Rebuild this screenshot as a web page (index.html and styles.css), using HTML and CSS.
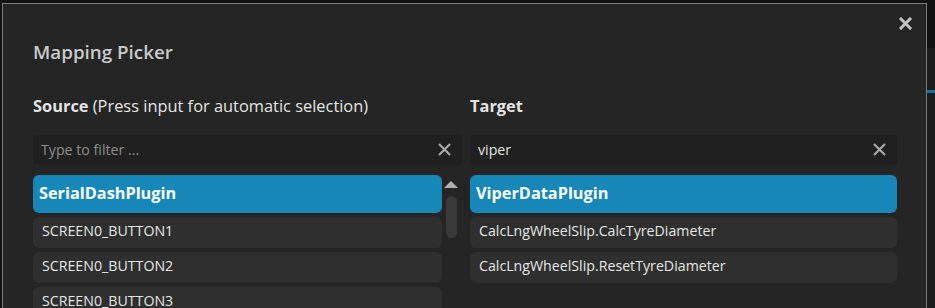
FILE: index.html
```html
<!DOCTYPE html>
<html lang="en">
<head>
  <meta charset="UTF-8">
  <meta name="viewport" content="width=device-width, initial-scale=1.0">
  <title>Mapping Picker</title>
  <link rel="stylesheet" href="styles.css">
</head>
<body>

  <!-- Ventana de fondo (parte visible a la derecha) -->
  <div class="backdrop">
    <div class="backdrop-bar"></div>
  </div>

  <div class="dialog">
    <button class="dialog-close" title="Close">
      <svg width="13" height="13" viewBox="0 0 13 13"><path d="M2 2 L11 11 M11 2 L2 11" stroke="#c4c4c4" stroke-width="3" stroke-linecap="square"/></svg>
    </button>

    <h1 class="dialog-title">Mapping Picker</h1>

    <div class="columns">
      <!-- Origen -->
      <div class="column">
        <h2 class="column-title"><strong>Source</strong> (Press input for automatic selection)</h2>
        <div class="filter">
          <input type="text" placeholder="Type to filter ...">
          <span class="filter-clear">
            <svg width="15" height="15" viewBox="0 0 15 15"><path d="M2 2 L13 13 M13 2 L2 13" stroke="#a8a8a8" stroke-width="2.2"/></svg>
          </span>
        </div>
        <div class="list-wrap">
          <div class="list">
            <div class="item item-group">SerialDashPlugin</div>
            <div class="item">SCREEN0_BUTTON1</div>
            <div class="item">SCREEN0_BUTTON2</div>
            <div class="item">SCREEN0_BUTTON3</div>
          </div>
          <div class="scrollbar">
            <div class="scroll-up"></div>
            <div class="scroll-thumb"></div>
          </div>
        </div>
      </div>

      <!-- Destino -->
      <div class="column">
        <h2 class="column-title"><strong>Target</strong></h2>
        <div class="filter">
          <input type="text" value="viper">
          <span class="filter-clear">
            <svg width="15" height="15" viewBox="0 0 15 15"><path d="M2 2 L13 13 M13 2 L2 13" stroke="#a8a8a8" stroke-width="2.2"/></svg>
          </span>
        </div>
        <div class="list">
          <div class="item item-group">ViperDataPlugin</div>
          <div class="item">CalcLngWheelSlip.CalcTyreDiameter</div>
          <div class="item">CalcLngWheelSlip.ResetTyreDiameter</div>
        </div>
      </div>
    </div>
  </div>

</body>
</html>
```

FILE: styles.css
```css
html, body {
  margin: 0;
  height: 100%;
  overflow: hidden;
}
body {
  background-color: #121212;
  font-family: "Open Sans", "Noto Sans", sans-serif;
  color: #e0e0e0;
  position: relative;
}
.backdrop {
  position: absolute;
  top: 48px;
  right: 0;
  width: 20px;
  height: 260px;
  background-color: #1b1b1b;
}
.backdrop-bar {
  margin-top: 42px;
  height: 3px;
  background-color: #1a6f99;
}
.dialog {
  position: relative;
  margin: 3px 0 0 2px;
  width: 925px;
  height: 320px;
  background-color: #252525;
  border: 1px solid #7c7c7c;
  border-bottom: none;
  padding: 0 29px 0 30px;
  box-sizing: border-box;
}
.dialog-close {
  position: absolute;
  top: 13px;
  right: 14px;
  background: none;
  border: none;
  padding: 0;
  cursor: pointer;
}
.dialog-title {
  margin: 0;
  padding-top: 35px;
  font-size: 18.8px;
  font-weight: 600;
  color: #cacaca;
  line-height: 26px;
}
.columns {
  display: grid;
  grid-template-columns: 429px 427px;
  gap: 8px;
  margin-top: 30px;
}
.column-title {
  margin: 0 0 18px 0;
  font-size: 16.4px;
  font-weight: normal;
  line-height: 22px;
  color: #e4e4e4;
}
.column-title strong {
  font-weight: 700;
}
.filter {
  position: relative;
  height: 30px;
  background-color: #202020;
  border-radius: 3px;
  margin-bottom: 10px;
}
.filter input {
  width: 100%;
  height: 30px;
  box-sizing: border-box;
  background: transparent;
  border: none;
  outline: none;
  padding: 0 36px 2px 8px;
  font-family: inherit;
  font-size: 14.2px;
  color: #e2e2e2;
}
.filter input::placeholder {
  color: #8d8d8d;
}
.filter-clear {
  position: absolute;
  right: 10px;
  top: 7px;
  line-height: 0;
}
.list-wrap {
  display: flex;
  gap: 2px;
}
.list-wrap .list {
  flex: 1;
}
.list {
  display: flex;
  flex-direction: column;
  gap: 4px;
}
.item {
  height: 31px;
  line-height: 28px;
  padding: 0 9px 3px 9px;
  box-sizing: border-box;
  background-color: #2f2f2f;
  border-radius: 6px;
  font-size: 14.2px;
  color: #e6e6e6;
  white-space: nowrap;
}
.item-group {
  height: 38px;
  line-height: 37px;
  padding: 0 6px 1px 6px;
  background-color: #1787b8;
  color: #ffffff;
  font-size: 16.3px;
  font-weight: 700;
}
.scrollbar {
  width: 14px;
  margin-right: 4px;
  display: flex;
  flex-direction: column;
  align-items: center;
}
.scroll-up {
  margin-top: 6px;
  width: 0;
  height: 0;
  border-left: 7px solid transparent;
  border-right: 7px solid transparent;
  border-bottom: 7px solid #b0b0b0;
}
.scroll-thumb {
  margin-top: 8px;
  width: 11px;
  height: 42px;
  border-radius: 6px;
  background-color: #3a3a3a;
}
```
